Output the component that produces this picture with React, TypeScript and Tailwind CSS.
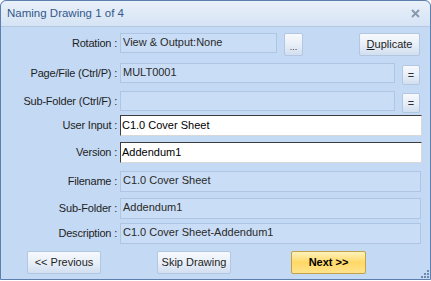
import React from "react";

const font = { fontFamily: '"Liberation Sans", Arial, sans-serif' };

function Label({ children }: { children: React.ReactNode }) {
  return (
    <div className="w-[119px] shrink-0 pr-[3px] text-right text-[11px] tracking-[-0.2px] text-[#1e1e1e]">
      {children}
    </div>
  );
}

function ReadField({ w, text }: { w: string; text?: string }) {
  return (
    <div
      className={`${w} h-[20px] shrink-0 border border-[#aec6e3] bg-[#c9ddf6] pl-[2px] text-[11px] leading-[16px] text-[#2a2a2a]`}
    >
      {text}
    </div>
  );
}

function EditField({ text }: { text: string }) {
  return (
    <div className="h-[21px] w-[302px] shrink-0 border border-[#3d3d3d] border-r-[#d8d8d8] border-b-[#d8d8d8] bg-white pl-[1px] text-[11px] leading-[18px] text-black">
      {text}
    </div>
  );
}

function Btn({
  w,
  h = "h-[23px]",
  children,
  yellow,
}: {
  w: string;
  h?: string;
  children: React.ReactNode;
  yellow?: boolean;
}) {
  return (
    <div
      className={`${w} ${h} flex shrink-0 items-center justify-center rounded-[2px] border text-[11px] ${
        yellow
          ? "border-[#c2a24a] bg-gradient-to-b from-[#fff3b8] via-[#ffd865] to-[#ffe38c] font-bold text-black"
          : "border-[#b3c7e0] bg-gradient-to-b from-[#f7fafd] via-[#e8eff8] to-[#d2dff0] text-[#1e1e1e]"
      }`}
    >
      {children}
    </div>
  );
}

export default function App() {
  return (
    <div style={font} className="h-[281px] w-[431px] overflow-hidden bg-white">
      <div className="relative flex h-[280px] w-[431px] flex-col rounded-t-[6px] border border-[#5d7fae] bg-[#c4d9f3]">
        {/* title bar */}
        <div className="flex h-[26px] items-center justify-between rounded-t-[6px] border-b border-[#b4c8e2] bg-gradient-to-b from-[#e9f1fa] to-[#d5e3f4] pl-[6px] pr-[10px]">
          <span className="text-[11.5px] text-[#34588a]">Naming Drawing 1 of 4</span>
          <svg width="9" height="9" viewBox="0 0 9 9">
            <path d="M1 1 L8 8 M8 1 L1 8" stroke="#8797ad" strokeWidth="1.8" />
          </svg>
        </div>

        <div className="flex flex-col">
          {/* Rotation */}
          <div className="mt-[6px] flex h-[23px] items-start">
            <div className="flex h-[20px] items-center"><Label>Rotation :</Label></div>
            <ReadField w="w-[157px]" text="View & Output:None" />
            <div className="ml-[7px]">
              <Btn w="w-[19px]"><span className="text-[9px] leading-none text-[#333] mt-[6px]">...</span></Btn>
            </div>
            <div className="ml-[56px]">
              <Btn w="w-[61px]"><span><span className="underline">D</span>uplicate</span></Btn>
            </div>
          </div>

          {/* Page/File */}
          <div className="mt-[7px] flex h-[22px] items-start">
            <div className="flex h-[20px] items-center"><Label>Page/File (Ctrl/P) :</Label></div>
            <ReadField w="w-[275px]" text="MULT0001" />
            <div className="ml-[7px] mt-[2px]">
              <Btn w="w-[18px]" h="h-[20px]"><span className="text-[#333]">=</span></Btn>
            </div>
          </div>

          {/* Sub-Folder Ctrl/F */}
          <div className="mt-[6px] flex h-[22px] items-start">
            <div className="flex h-[20px] items-center"><Label>Sub-Folder (Ctrl/F) :</Label></div>
            <ReadField w="w-[275px]" />
            <div className="ml-[7px] mt-[2px]">
              <Btn w="w-[18px]" h="h-[20px]"><span className="text-[#333]">=</span></Btn>
            </div>
          </div>

          {/* User Input */}
          <div className="mt-[2px] flex h-[21px] items-center">
            <Label>User Input :</Label>
            <EditField text="C1.0 Cover Sheet" />
          </div>

          {/* Version */}
          <div className="mt-[6px] flex h-[21px] items-center">
            <Label>Version :</Label>
            <EditField text="Addendum1" />
          </div>

          {/* Filename */}
          <div className="mt-[8px] flex h-[21px] items-center">
            <Label>Filename :</Label>
            <ReadField w="w-[301px] h-[21px]" text="C1.0 Cover Sheet" />
          </div>

          {/* Sub-Folder */}
          <div className="mt-[6px] flex h-[21px] items-center">
            <Label>Sub-Folder :</Label>
            <ReadField w="w-[301px] h-[21px]" text="Addendum1" />
          </div>

          {/* Description */}
          <div className="mt-[4px] flex h-[21px] items-center">
            <Label>Description :</Label>
            <ReadField w="w-[301px] h-[21px]" text="C1.0 Cover Sheet-Addendum1" />
          </div>

          {/* buttons */}
          <div className="mt-[7px] flex h-[23px] items-center pl-[26px]">
            <Btn w="w-[74px]">&lt;&lt; Previous</Btn>
            <div className="ml-[56px]">
              <Btn w="w-[74px]">Skip Drawing</Btn>
            </div>
            <div className="ml-[60px]">
              <Btn w="w-[75px]" yellow>Next &gt;&gt;</Btn>
            </div>
          </div>
        </div>

        {/* resize grip */}
        <svg className="absolute bottom-[1px] right-[1px]" width="9" height="9" viewBox="0 0 9 9">
          <rect x="7" y="1" width="2" height="2" fill="#6f89ad" />
          <rect x="4" y="4" width="2" height="2" fill="#6f89ad" />
          <rect x="7" y="4" width="2" height="2" fill="#6f89ad" />
          <rect x="1" y="7" width="2" height="2" fill="#6f89ad" />
          <rect x="4" y="7" width="2" height="2" fill="#6f89ad" />
          <rect x="7" y="7" width="2" height="2" fill="#6f89ad" />
        </svg>
      </div>
    </div>
  );
}
